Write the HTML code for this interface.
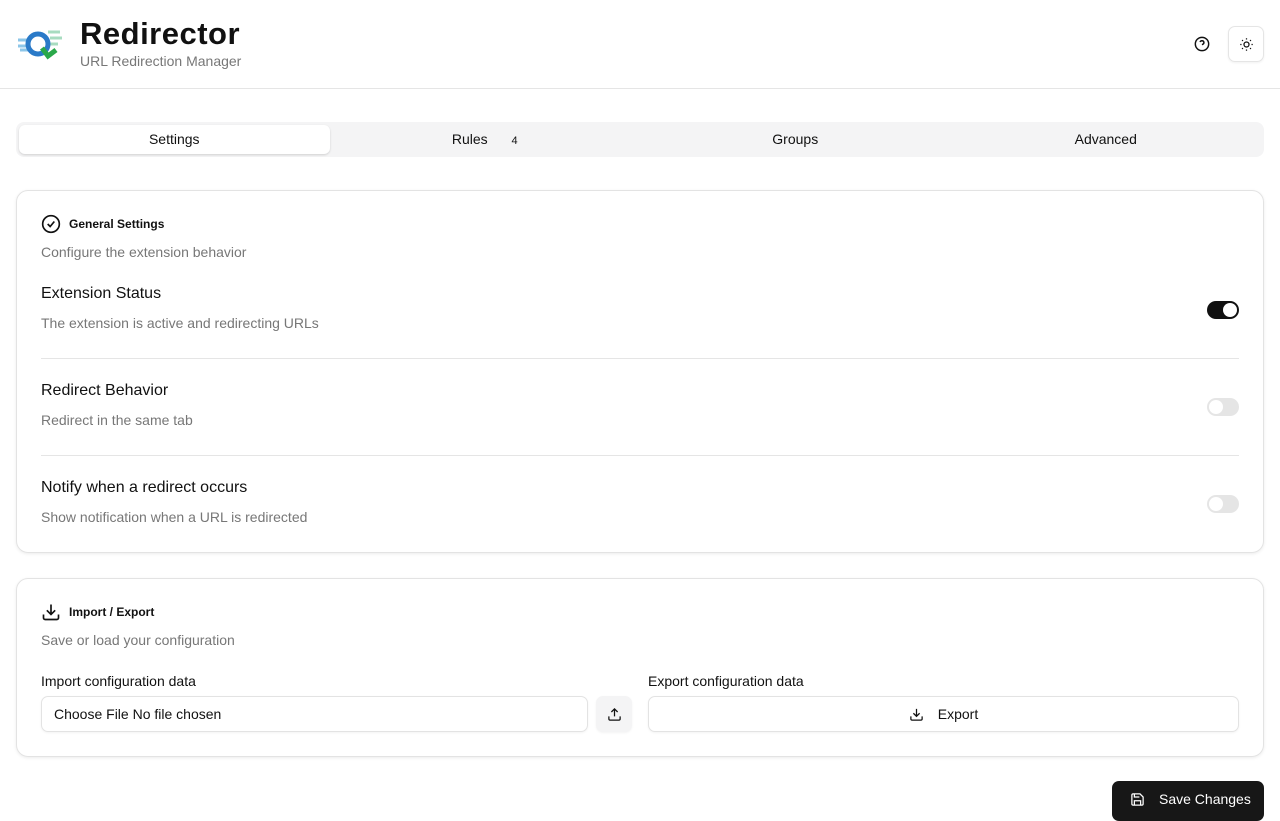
<!DOCTYPE html>
<html><head><meta charset="utf-8"><style>
*{box-sizing:border-box;margin:0;padding:0}
body{width:1280px;height:800px;overflow:hidden;background:#fff;font-family:"Liberation Sans","DejaVu Sans",sans-serif;color:#111}
.hdr{height:89px;border-bottom:1px solid #e5e5e5;position:relative}
.title{position:absolute;left:80px;top:16px;font-size:31px;font-weight:bold;letter-spacing:0.5px}
.sub{position:absolute;left:80px;top:53px;font-size:14px;color:#777}
.tabs{position:absolute;left:16px;top:122px;width:1248px;height:35px;background:#f4f4f5;border-radius:8px;display:flex;padding:3px}
.tab{flex:1;text-align:center;font-size:14px;line-height:29px;color:#111}
.tab.a{background:#fff;border-radius:6px;box-shadow:0 1px 2px rgba(0,0,0,.15)}
.card{position:absolute;left:16px;width:1248px;border:1px solid #e3e3e3;border-radius:12px;box-shadow:0 1px 3px rgba(0,0,0,.08)}
.h{position:absolute;left:24px;font-size:12px;font-weight:bold;display:flex;align-items:center;gap:8px}
.d{position:absolute;left:24px;font-size:14px;color:#777}
.row{position:absolute;left:24px;right:24px;height:71px}
.row .t{position:absolute;top:-3px;font-size:16px}
.row .s{position:absolute;top:27px;font-size:14px;color:#777}
.sw{position:absolute;right:0;top:13px;width:32px;height:18px;border-radius:9px;background:#e5e5e5}
.sw.on{background:#111}
.sw i{position:absolute;top:2px;left:2px;width:14px;height:14px;border-radius:50%;background:#fff}
.sw.on i{left:16px}
.lbl{position:absolute;font-size:14px;font-weight:500}
.box{position:absolute;border:1px solid #e3e3e3;border-radius:7px;height:36px;font-size:14px;box-shadow:0 1px 2px rgba(0,0,0,.05)}
</style></head><body>
<div class="hdr">
<svg style="position:absolute;left:16px;top:26px" width="48" height="36" viewBox="0 0 48 36"><path d="M2 14h12M2 20h12M4 24h10" stroke="#8cc6e8" stroke-width="3"/><path d="M32 6h12M34 12h12M32 18h10" stroke="#a8dcc0" stroke-width="3"/><circle cx="22" cy="18" r="10" fill="none" stroke="#2a7ac8" stroke-width="5"/><path d="M26 22l6 8 8-6" stroke="#2aa84a" stroke-width="5" fill="none"/></svg>
<div class="title">Redirector</div><div class="sub">URL Redirection Manager</div>
<svg style="position:absolute;left:1194px;top:36px" width="16" height="16" viewBox="0 0 24 24" fill="none" stroke="#111" stroke-width="2.2"><circle cx="12" cy="12" r="10"/><path d="M9.1 9a3 3 0 015.8 1c0 2-3 3-3 3M12 17h.01"/></svg>
<div style="position:absolute;left:1228px;top:26px;width:36px;height:36px;border:1px solid #e5e5e5;border-radius:7px;box-shadow:0 1px 2px rgba(0,0,0,.06)"><svg style="position:absolute;left:10px;top:10px" width="15" height="15" viewBox="0 0 24 24" fill="none" stroke="#111" stroke-width="2"><circle cx="12" cy="12" r="4"/><path d="M12 2v2M12 20v2M4.9 4.9l1.4 1.4M17.7 17.7l1.4 1.4M2 12h2M20 12h2M6.3 17.7l-1.4 1.4M19.1 4.9l-1.4 1.4"/></svg></div>
</div>
<div class="tabs"><div class="tab a">Settings</div><div class="tab">Rules <span style="font-size:11px;margin-left:20px">4</span></div><div class="tab">Groups</div><div class="tab">Advanced</div></div>
<div class="card" style="top:190px;height:363px">
<div class="h" style="top:23px"><svg width="20" height="20" viewBox="0 0 24 24" fill="none" stroke="#111" stroke-width="2"><circle cx="12" cy="12" r="10"/><path d="M8 12l3 3 5-6"/></svg>General Settings</div>
<div class="d" style="top:53px">Configure the extension behavior</div>
<div class="row" style="top:97px;border-bottom:1px solid #e5e5e5"><div class="t">Extension Status</div><div class="s">The extension is active and redirecting URLs</div><div class="sw on"><i></i></div></div>
<div class="row" style="top:194px;border-bottom:1px solid #e5e5e5"><div class="t">Redirect Behavior</div><div class="s">Redirect in the same tab</div><div class="sw"><i></i></div></div>
<div class="row" style="top:291px"><div class="t">Notify when a redirect occurs</div><div class="s">Show notification when a URL is redirected</div><div class="sw"><i></i></div></div>
</div>
<div class="card" style="top:578px;height:179px">
<div class="h" style="top:23px"><svg width="20" height="20" viewBox="0 0 24 24" fill="none" stroke="#111" stroke-width="2"><path d="M21 15v4a2 2 0 01-2 2H5a2 2 0 01-2-2v-4M7 10l5 5 5-5M12 15V3"/></svg>Import / Export</div>
<div class="d" style="top:53px">Save or load your configuration</div>
<div class="lbl" style="left:24px;top:94px">Import configuration data</div>
<div class="lbl" style="left:631px;top:94px">Export configuration data</div>
<div class="box" style="left:24px;top:117px;width:547px;line-height:34px;padding-left:12px"><b style="font-weight:500">Choose File</b> No file chosen</div>
<div class="box" style="left:579px;top:117px;width:36px;background:#f4f4f5;border-color:#f4f4f5"><svg style="position:absolute;left:10px;top:10px" width="15" height="15" viewBox="0 0 24 24" fill="none" stroke="#111" stroke-width="2"><path d="M21 15v4a2 2 0 01-2 2H5a2 2 0 01-2-2v-4M17 8l-5-5-5 5M12 3v12"/></svg></div>
<div class="box" style="left:631px;top:117px;width:591px;text-align:center;line-height:34px"><svg style="vertical-align:-3px;margin-right:14px" width="15" height="15" viewBox="0 0 24 24" fill="none" stroke="#111" stroke-width="2"><path d="M21 15v4a2 2 0 01-2 2H5a2 2 0 01-2-2v-4M7 10l5 5 5-5M12 15V3"/></svg>Export</div>
</div>
<div style="position:absolute;left:1112px;top:781px;width:152px;height:40px;background:#171717;border-radius:7px;color:#fff;font-size:14px;padding:10px 0 0 18px"><svg style="vertical-align:-3px;margin-right:14px" width="15" height="15" viewBox="0 0 24 24" fill="none" stroke="#fff" stroke-width="2"><path d="M5 3h11l5 5v11a2 2 0 01-2 2H5a2 2 0 01-2-2V5a2 2 0 012-2zM7 3v5h8M7 21v-7h10v7"/></svg>Save Changes</div>
</body></html>
